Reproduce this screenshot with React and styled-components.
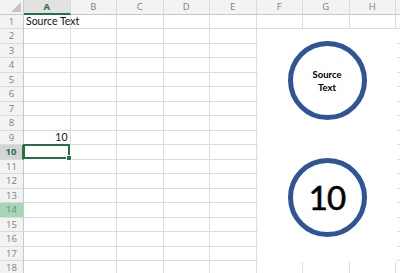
import React from "react";
import styled, { createGlobalStyle } from "styled-components";

const Global = createGlobalStyle`
  html, body { margin: 0; padding: 0; background: #fff; overflow: hidden; }
  body { font-family: Lato, "Liberation Sans", sans-serif; }
`;

const COLS = ["A", "B", "C", "D", "E", "F", "G", "H", "I"];
const ROWS = Array.from({ length: 18 }, (_, i) => i + 1);
const GREEN = "#217346";
const GRID = "#dcdcdc";

const Sheet = styled.div`
  position: relative;
  width: 400px;
  height: 273px;
  overflow: hidden;
  display: grid;
  grid-template-columns: 24px repeat(8, 46.5px) 46.5px;
  grid-template-rows: 14.5px repeat(18, 14.5px);
`;

const Corner = styled.div`
  position: relative;
  background: #f3f3f3;
  border-right: 1px solid #c8c8c8;
  border-bottom: 1px solid #c8c8c8;
  box-sizing: border-box;
  &::after {
    content: "";
    position: absolute;
    right: 2px;
    bottom: 2px;
    width: 0;
    height: 0;
    border-left: 10px solid transparent;
    border-bottom: 10px solid #c4c4c4;
  }
`;

const ColHead = styled.div`
  box-sizing: border-box;
  background: ${(p) => (p.$active ? "#e2e2e2" : "#f3f3f3")};
  border-right: 1px solid #dadada;
  border-bottom: ${(p) => (p.$active ? `2px solid ${GREEN}` : "1px solid #c8c8c8")};
  color: ${(p) => (p.$active ? GREEN : "#808080")};
  font-family: "Open Sans", "Liberation Sans", sans-serif;
  font-weight: ${(p) => (p.$active ? 700 : 400)};
  font-size: 9.5px;
  display: flex;
  align-items: center;
  justify-content: center;
  line-height: 1;
`;

const RowHead = styled.div`
  box-sizing: border-box;
  background: ${(p) => (p.$active ? "#d4d4d4" : p.$hl ? "#a2d8b8" : "#f3f3f3")};
  border-right: ${(p) => (p.$active ? `2px solid ${GREEN}` : "1px solid #c8c8c8")};
  border-bottom: 1px solid #dadada;
  color: ${(p) => (p.$active ? GREEN : "#808080")};
  font-family: "Open Sans", "Liberation Sans", sans-serif;
  font-weight: ${(p) => (p.$active ? 700 : 400)};
  font-size: 9.5px;
  display: flex;
  align-items: center;
  justify-content: center;
  line-height: 1;
`;

const Cell = styled.div`
  position: relative;
  box-sizing: border-box;
  border-right: 1px solid ${GRID};
  border-bottom: 1px solid ${GRID};
  font-family: Lato, "Liberation Sans", sans-serif;
  font-size: 10.5px;
  color: #111;
  display: flex;
  align-items: center;
  justify-content: ${(p) => (p.$num ? "flex-end" : "flex-start")};
  padding: 0 2px 0 2px;
  white-space: nowrap;
  overflow: visible;
  z-index: ${(p) => (p.$selected ? 2 : 1)};
  ${(p) =>
    p.$selected &&
    `
    box-shadow: inset 0 0 0 2px ${GREEN};
    margin: -1px 0 0 -1px;
    border-color: transparent;
    &::after {
      content: "";
      position: absolute;
      right: -2px;
      bottom: -2px;
      width: 4px;
      height: 4px;
      background: ${GREEN};
      border: 1px solid #fff;
    }
  `}
`;

const Shapes = styled.div`
  position: absolute;
  left: 257.5px;
  top: 29px;
  width: 139px;
  height: 233px;
  background: #fff;
  z-index: 5;
  display: flex;
  flex-direction: column;
  align-items: center;
  padding-top: 12px;
  gap: 38px;
  box-sizing: border-box;
`;

const Circle = styled.div`
  width: 79px;
  height: 79px;
  box-sizing: border-box;
  border: 5px solid #2f5597;
  border-radius: 50%;
  background: #fff;
  display: flex;
  align-items: center;
  justify-content: center;
  text-align: center;
  color: #000;
  font-family: Lato, "Liberation Sans", sans-serif;
  font-size: ${(p) => (p.$big ? "33px" : "9.5px")};
  font-weight: ${(p) => (p.$big ? 400 : 700)};
  line-height: ${(p) => (p.$big ? 1 : "13px")};
  letter-spacing: ${(p) => (p.$big ? "-1px" : "0")};
  -webkit-text-stroke: ${(p) => (p.$big ? "0.6px #000" : "0")};
`;

const cellContent = (r, c) => {
  if (r === 1 && c === "A") return { text: "Source Text" };
  if (r === 9 && c === "A") return { text: "10", num: true };
  return null;
};

export default function App() {
  return (
    <>
      <Global />
      <Sheet>
        <Corner />
        {COLS.map((c) => (
          <ColHead key={c} $active={c === "A"}>
            {c === "I" ? "" : c}
          </ColHead>
        ))}
        {ROWS.map((r) => (
          <React.Fragment key={r}>
            <RowHead $active={r === 10} $hl={r === 14}>
              {r}
            </RowHead>
            {COLS.map((c) => {
              const content = cellContent(r, c);
              return (
                <Cell key={c} $num={content?.num} $selected={r === 10 && c === "A"}>
                  {content?.text}
                </Cell>
              );
            })}
          </React.Fragment>
        ))}
        <Shapes>
          <Circle>
            Source
            <br />
            Text
          </Circle>
          <Circle $big>10</Circle>
        </Shapes>
      </Sheet>
    </>
  );
}
